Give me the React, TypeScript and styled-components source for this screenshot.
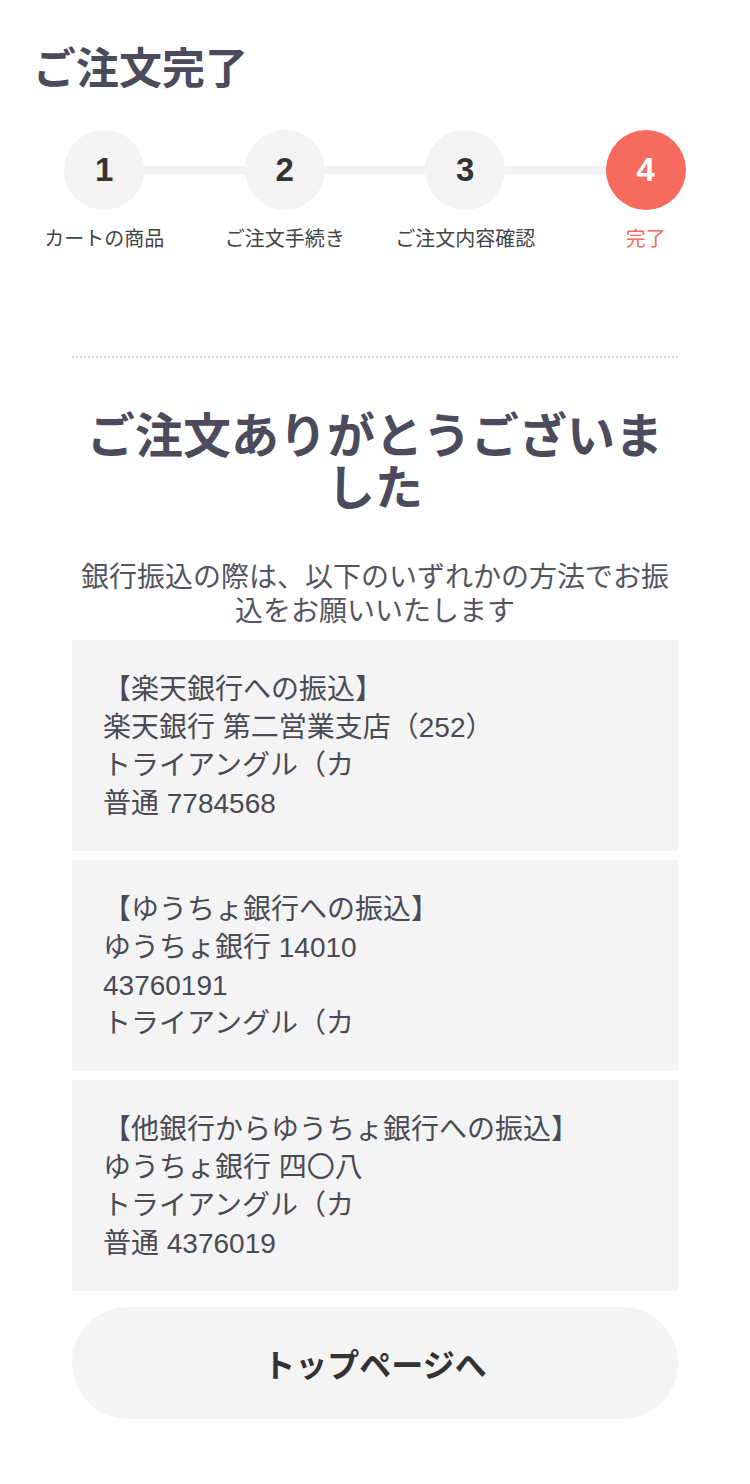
import React from 'react';
import styled, { createGlobalStyle } from 'styled-components';

const GlobalStyle = createGlobalStyle`
  html, body {
    margin: 0;
    padding: 0;
    background: #ffffff;
  }
  body {
    font-family: 'Liberation Sans', 'Noto Sans CJK JP', 'Noto Sans', sans-serif;
    color: #4b4b5a;
  }
  * {
    box-sizing: border-box;
  }
`;

const steps = ['カートの商品', 'ご注文手続き', 'ご注文内容確認', '完了'];

const accounts = [
  ['【楽天銀行への振込】', '楽天銀行 第二営業支店（252）', 'トライアングル（カ', '普通 7784568'],
  ['【ゆうちょ銀行への振込】', 'ゆうちょ銀行 14010', '43760191', 'トライアングル（カ'],
  ['【他銀行からゆうちょ銀行への振込】', 'ゆうちょ銀行 四〇八', 'トライアングル（カ', '普通 4376019'],
];

const App = () => {
  const current = 3;
  return (
    <>
      <GlobalStyle />
      <Page>
        <Title>ご注文完了</Title>
        <Stepper>
          {steps.map((label, i) => (
            <Step key={label} $last={i === steps.length - 1}>
              <Circle $active={i === current}>{i + 1}</Circle>
              <StepLabel $active={i === current}>{label}</StepLabel>
            </Step>
          ))}
        </Stepper>
        <Content>
          <Divider />
          <Heading>
            ご注文ありがとうございま
            <br />
            した
          </Heading>
          <Lead>
            銀行振込の際は、以下のいずれかの方法でお振
            <br />
            込をお願いいたします
          </Lead>
          <Cards>
            {accounts.map((lines) => (
              <Card key={lines[0]}>
                {lines.map((line) => (
                  <Line key={line}>{line}</Line>
                ))}
              </Card>
            ))}
          </Cards>
          <TopButton>トップページへ</TopButton>
        </Content>
      </Page>
    </>
  );
};

export default App;

const Page = styled.div`
  width: 750px;
  min-height: 1484px;
  padding-top: 36px;
`;

const Title = styled.h1`
  margin: 0;
  padding-left: 33px;
  font-family: 'Noto Sans CJK JP', sans-serif;
  font-size: 43px;
  line-height: 58px;
  font-weight: 700;
  color: #4b4b5c;
`;

const Stepper = styled.div`
  display: flex;
  padding: 0 14px;
  margin-top: 36px;
`;

const Step = styled.div<{ $last: boolean }>`
  position: relative;
  flex: 1;
  display: flex;
  flex-direction: column;
  align-items: center;

  &::after {
    content: '';
    display: ${(p) => (p.$last ? 'none' : 'block')};
    position: absolute;
    top: 36px;
    left: 50%;
    width: 100%;
    height: 8px;
    background: #f3f3f3;
    z-index: 0;
  }
`;

const Circle = styled.div<{ $active: boolean }>`
  position: relative;
  z-index: 1;
  width: 80px;
  height: 80px;
  border-radius: 50%;
  display: flex;
  align-items: center;
  justify-content: center;
  background: ${(p) => (p.$active ? '#f76a5e' : '#f3f3f3')};
  color: ${(p) => (p.$active ? '#ffffff' : '#333333')};
  font-size: 33px;
  font-weight: 700;
`;

const StepLabel = styled.div<{ $active: boolean }>`
  margin-top: 16px;
  font-size: 20px;
  line-height: 26px;
  color: ${(p) => (p.$active ? '#f26a5e' : '#444444')};
  white-space: nowrap;
`;

const Content = styled.div`
  padding: 0 72px;
`;

const Divider = styled.div`
  margin-top: 104px;
  border-top: 2px dotted #cfcfcf;
`;

const Heading = styled.h2`
  margin: 48px 0 0;
  text-align: center;
  font-family: 'Noto Sans CJK JP', sans-serif;
  font-size: 48px;
  line-height: 52px;
  font-weight: 700;
  color: #4b4b5c;
`;

const Lead = styled.p`
  margin: 51px 0 0;
  text-align: center;
  font-size: 28px;
  line-height: 34px;
  color: #55555f;
`;

const Cards = styled.div`
  display: flex;
  flex-direction: column;
  gap: 9px;
  margin-top: 11px;
`;

const Card = styled.div`
  background: #f4f4f4;
  padding: 31px 31px 28px;
`;

const Line = styled.div`
  font-size: 28px;
  line-height: 38px;
  color: #4a4a55;
  white-space: nowrap;
`;

const TopButton = styled.button`
  display: block;
  width: 100%;
  height: 112px;
  margin-top: 16px;
  border: none;
  border-radius: 56px;
  background: #f4f4f4;
  font-family: 'Noto Sans CJK JP', sans-serif;
  font-size: 32px;
  font-weight: 700;
  color: #333333;
  cursor: pointer;
`;
